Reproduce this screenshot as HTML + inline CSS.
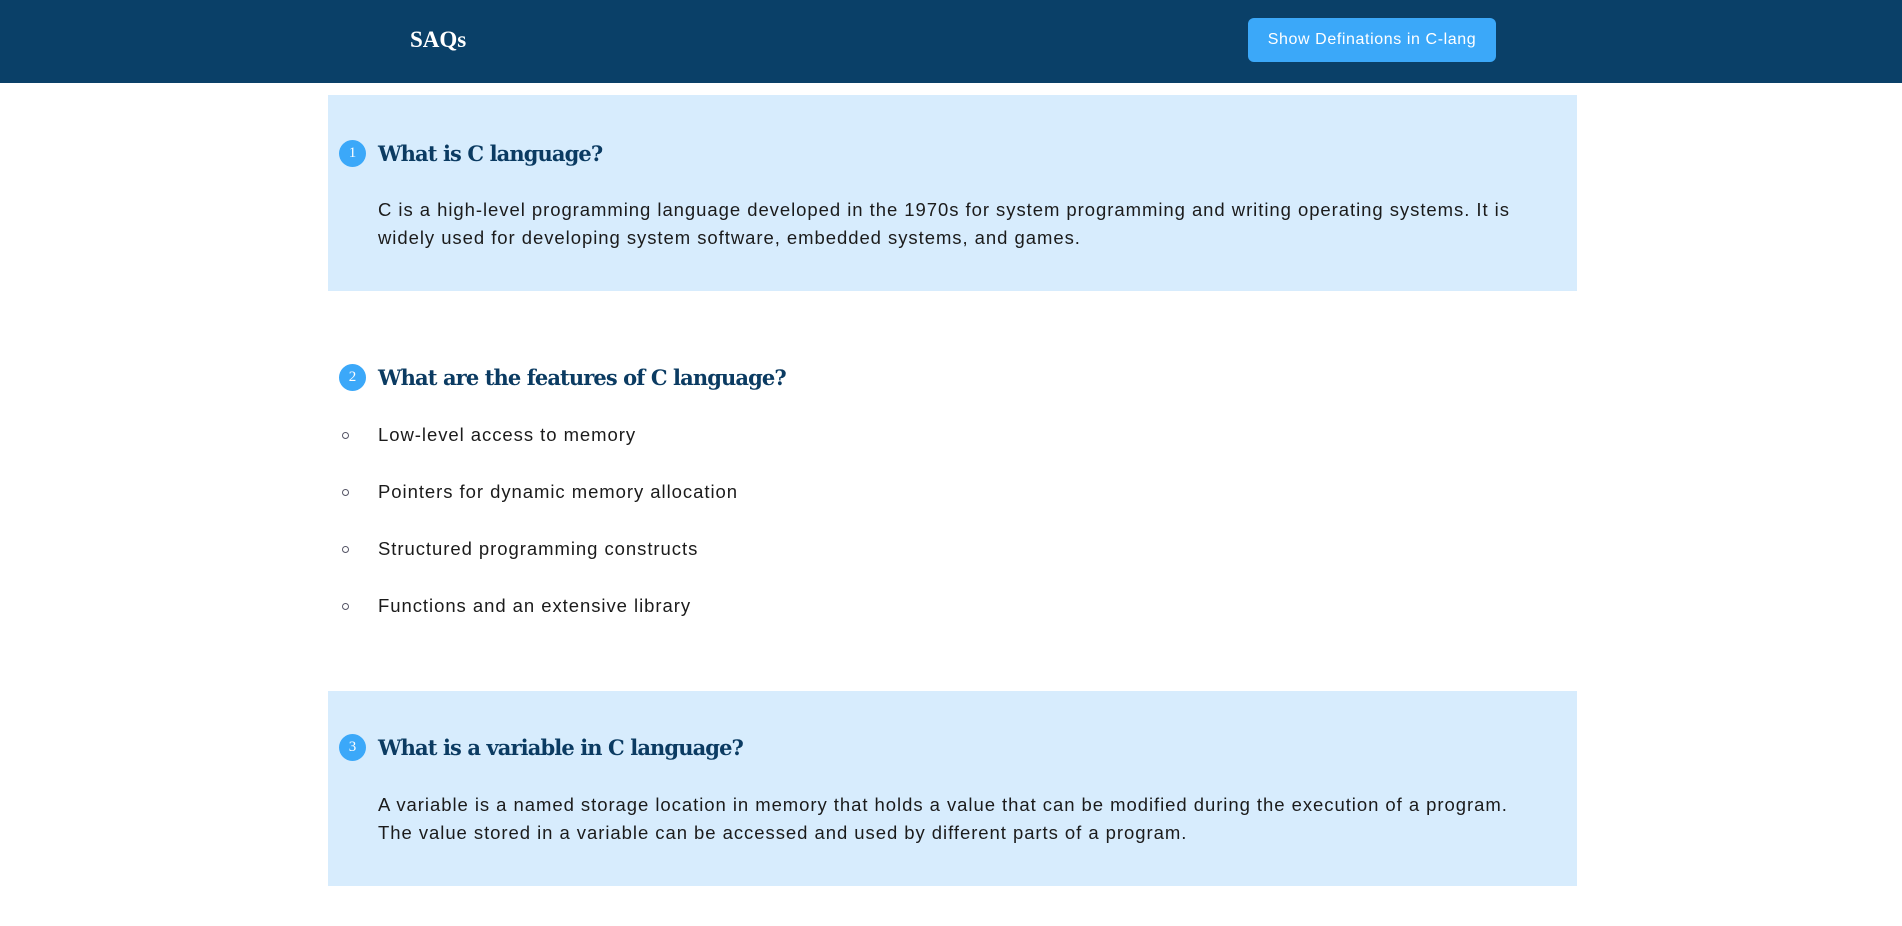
<!DOCTYPE html>
<html><head><meta charset="utf-8"><style>
*{margin:0;padding:0;box-sizing:border-box}
body{width:1902px;height:926px;background:#fff;position:relative;overflow:hidden;font-family:"Liberation Sans",sans-serif;color:#1b1b1b}
.hdr{position:absolute;left:0;top:0;width:1902px;height:83px;background:#0a4068}
.logo{position:absolute;left:410px;top:27px;font-family:"Liberation Serif",serif;font-weight:bold;font-size:23px;color:#fff}
.btn{position:absolute;left:1248px;top:18px;width:248px;height:44px;background:#3ba8f9;border-radius:6px;color:#fff;font-size:16px;text-align:center;line-height:44px;letter-spacing:0.6px}
.panel{position:absolute;left:328px;width:1249px;background:#d7ecfd}
.num{position:absolute;left:339px;width:27px;height:27px;border-radius:50%;background:#3ba8f9;color:#fff;font-family:"Liberation Serif",serif;font-size:15px;text-align:center;line-height:27px}
.h{position:absolute;left:378px;font-family:"DejaVu Serif","Liberation Serif",serif;font-weight:bold;font-size:21px;color:#0b3b62;letter-spacing:-0.9px;line-height:30px}
.p{position:absolute;left:378px;font-size:18.5px;line-height:28px;white-space:nowrap;letter-spacing:0.95px}
.li{position:absolute;left:378px;font-size:18.5px;line-height:28px;letter-spacing:0.95px}
.b{position:absolute;left:342px;width:7px;height:7px;border:1.5px solid #556;border-radius:50%}
</style></head><body>
<div class="hdr"><div class="logo">SAQs</div><div class="btn">Show Definations in C-lang</div></div>

<div class="panel" style="top:95px;height:196px"></div>
<div class="num" style="top:140px">1</div>
<div class="h" style="top:139px">What is C language?</div>
<div class="p" style="top:196px">C is a high-level programming language developed in the 1970s for system programming and writing operating systems. It is<br>widely used for developing system software, embedded systems, and games.</div>

<div class="num" style="top:364px">2</div>
<div class="h" style="top:363px">What are the features of C language?</div>
<div class="b" style="top:432px"></div><div class="li" style="top:421px">Low-level access to memory</div>
<div class="b" style="top:489px"></div><div class="li" style="top:478px">Pointers for dynamic memory allocation</div>
<div class="b" style="top:546px"></div><div class="li" style="top:535px">Structured programming constructs</div>
<div class="b" style="top:603px"></div><div class="li" style="top:592px">Functions and an extensive library</div>

<div class="panel" style="top:691px;height:195px"></div>
<div class="num" style="top:734px">3</div>
<div class="h" style="top:733px">What is a variable in C language?</div>
<div class="p" style="top:791px">A variable is a named storage location in memory that holds a value that can be modified during the execution of a program.<br>The value stored in a variable can be accessed and used by different parts of a program.</div>
</body></html>
